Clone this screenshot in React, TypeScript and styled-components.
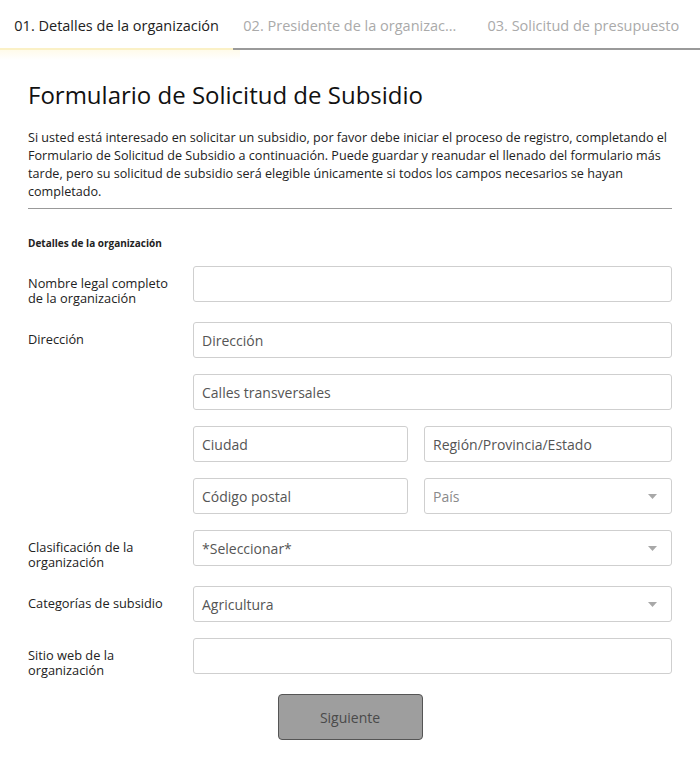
import React from "react";
import styled, { createGlobalStyle } from "styled-components";

const Global = createGlobalStyle`
  html, body { margin: 0; padding: 0; background: #fff; }
  body { font-family: "Open Sans", "DejaVu Sans", sans-serif; color: #222; }
  * { box-sizing: border-box; }
`;

const Tabs = styled.div`
  display: grid;
  grid-template-columns: repeat(3, minmax(0, 1fr));
  height: 50px;
`;

const Tab = styled.div<{ $active?: boolean }>`
  position: relative;
  min-width: 0;
  display: flex;
  align-items: center;
  justify-content: center;
  padding: 2px 10px 0;
  font-size: 14.5px;
  color: ${(p) => (p.$active ? "#222" : "#aaa")};
  border-bottom: 2px solid ${(p) => (p.$active ? "#fbf1c6" : "#9a9a9a")};
  white-space: nowrap;
  &::after {
    content: "";
    display: ${(p) => (p.$active ? "block" : "none")};
    position: absolute;
    left: 0;
    width: 240px;
    top: 50px;
    height: 10px;
    background: linear-gradient(#fffbea, rgba(255, 255, 255, 0));
  }
`;

const TabText = styled.span`
  min-width: 0;
  overflow: hidden;
  text-overflow: ellipsis;
  white-space: nowrap;
`;

const Content = styled.div`
  padding: 28px 28px 0;
`;

const Title = styled.h1`
  margin: 0;
  font-size: 24px;
  font-weight: 400;
  line-height: 33px;
  color: #111;
`;

const Intro = styled.p`
  margin: 18px 0 0;
  font-size: 12.6px;
  line-height: 18px;
  color: #222;
`;

const Rule = styled.hr`
  margin: 7px 0 0;
  border: none;
  border-top: 1px solid #999;
`;

const SectionLabel = styled.div`
  margin-top: 27px;
  font-size: 10px;
  font-weight: 700;
  line-height: 14px;
  color: #222;
`;

const Form = styled.div`
  margin-top: 16px;
  display: flex;
  flex-direction: column;
`;

const Row = styled.div`
  display: grid;
  grid-template-columns: 150px 1fr;
  column-gap: 15px;
  margin-bottom: 16px;
`;

const Label = styled.div`
  padding-top: 10px;
  font-size: 12.8px;
  line-height: 15px;
  color: #222;
`;

const Fields = styled.div`
  display: flex;
  flex-direction: column;
  gap: 16px;
`;

const Pair = styled.div`
  display: grid;
  grid-template-columns: 215fr 248fr;
  column-gap: 16px;
`;

const Input = styled.input`
  display: block;
  width: 100%;
  height: 36px;
  border: 1px solid #cfcfcf;
  border-radius: 3px;
  padding: 0 8px;
  font-family: "Open Sans", "DejaVu Sans", sans-serif;
  font-size: 14px;
  color: #333;
  background: #fff;
  &::placeholder { color: #555; opacity: 1; }
`;

const Select = styled.div<{ $muted?: boolean }>`
  display: flex;
  align-items: center;
  justify-content: space-between;
  height: 36px;
  border: 1px solid #cfcfcf;
  border-radius: 3px;
  padding: 0 14px 0 8px;
  font-size: 14px;
  color: ${(p) => (p.$muted ? "#8a8a8a" : "#555")};
  background: #fff;
`;

const Caret = () => (
  <svg width="9" height="5" viewBox="0 0 9 5">
    <path d="M0 0 L9 0 L4.5 5 Z" fill="#a8a8a8" />
  </svg>
);

const Actions = styled.div`
  display: flex;
  justify-content: center;
  padding: 0 0 28px;
`;

const Button = styled.button`
  width: 145px;
  height: 46px;
  background: #9e9e9e;
  border: 1px solid #555;
  border-radius: 4px;
  font-family: "Open Sans", "DejaVu Sans", sans-serif;
  font-size: 14px;
  color: #4a4a4a;
`;

export default function App() {
  return (
    <>
      <Global />
      <Tabs>
        <Tab $active>
          <TabText>01. Detalles de la organización</TabText>
        </Tab>
        <Tab>
          <TabText>02. Presidente de la organización</TabText>
        </Tab>
        <Tab>
          <TabText>03. Solicitud de presupuesto</TabText>
        </Tab>
      </Tabs>
      <Content>
        <Title>Formulario de Solicitud de Subsidio</Title>
        <Intro>
          Si usted está interesado en solicitar un subsidio, por favor debe iniciar el proceso de
          registro, completando el Formulario de Solicitud de Subsidio a continuación. Puede guardar y
          reanudar el llenado del formulario más tarde, pero su solicitud de subsidio será elegible
          únicamente si todos los campos necesarios se hayan completado.
        </Intro>
        <Rule />
        <SectionLabel>Detalles de la organización</SectionLabel>
        <Form>
          <Row>
            <Label>Nombre legal completo de la organización</Label>
            <Fields>
              <Input />
            </Fields>
          </Row>
          <Row>
            <Label>Dirección</Label>
            <Fields>
              <Input placeholder="Dirección" />
              <Input placeholder="Calles transversales" />
              <Pair>
                <Input placeholder="Ciudad" />
                <Input placeholder="Región/Provincia/Estado" />
              </Pair>
              <Pair>
                <Input placeholder="Código postal" />
                <Select $muted>
                  <span>País</span>
                  <Caret />
                </Select>
              </Pair>
            </Fields>
          </Row>
          <Row>
            <Label>Clasificación de la organización</Label>
            <Fields>
              <Select>
                <span>*Seleccionar*</span>
                <Caret />
              </Select>
            </Fields>
          </Row>
          <Row>
            <Label>Categorías de subsidio</Label>
            <Fields>
              <Select>
                <span>Agricultura</span>
                <Caret />
              </Select>
            </Fields>
          </Row>
          <Row>
            <Label>Sitio web de la organización</Label>
            <Fields>
              <Input />
            </Fields>
          </Row>
        </Form>
        <Actions>
          <Button>Siguiente</Button>
        </Actions>
      </Content>
    </>
  );
}
